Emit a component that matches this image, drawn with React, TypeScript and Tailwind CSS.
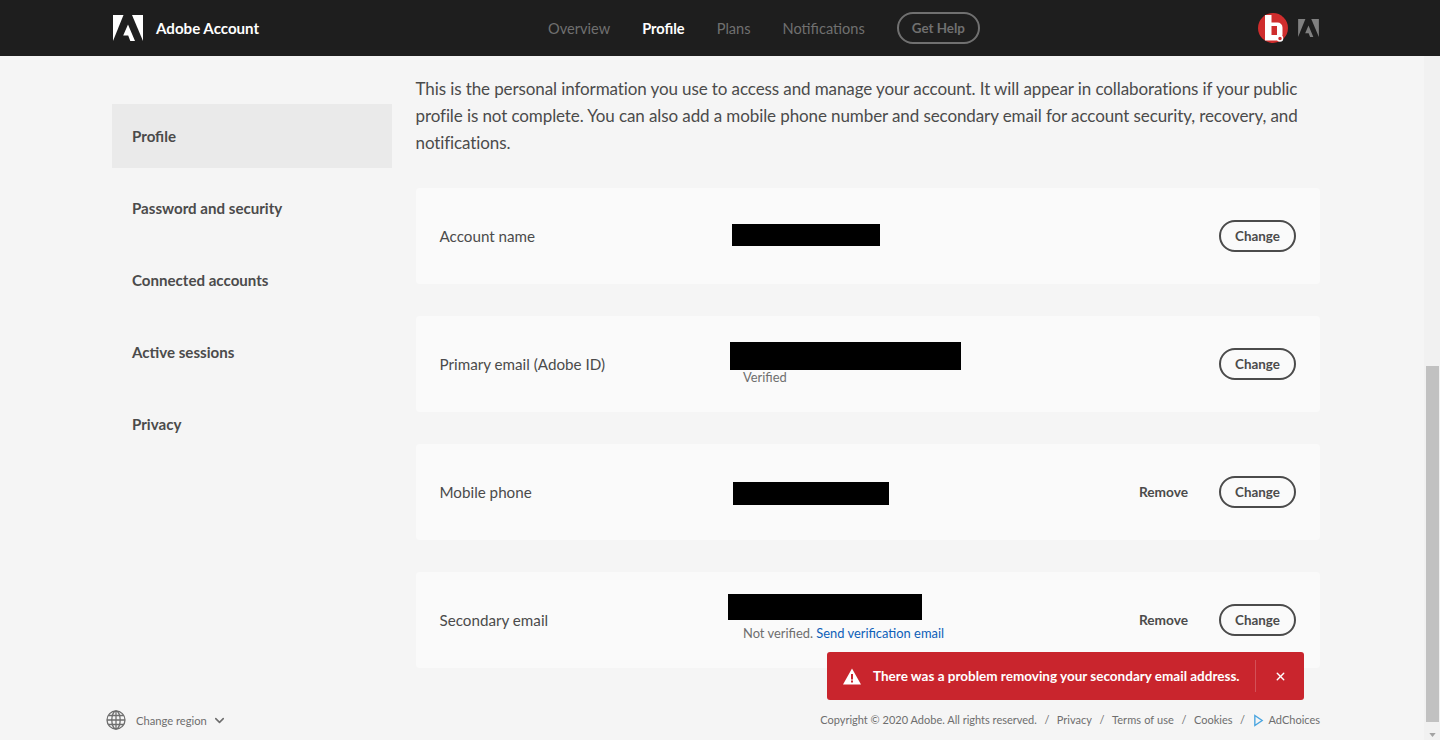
import { ChevronDown, X } from "lucide-react";

const FONT = "font-['Lato','Open_Sans',sans-serif]";

const SIDE_ITEMS = ["Profile", "Password and security", "Connected accounts", "Active sessions", "Privacy"];

function AdobeMark({ className }: { className: string }) {
  return (
    <svg viewBox="0 0 30 26" className={className} fill="currentColor" aria-hidden="true">
      <polygon points="0,0 10.5,0 0,26" />
      <polygon points="19,0 30,0 30,26" />
      <polygon points="15,9.5 22,26 17.3,26 15.2,20.6 10.2,20.6" />
    </svg>
  );
}

function ChangeButton() {
  return (
    <button className="flex h-8 w-[77px] items-center justify-center rounded-full border-2 border-[#4b4b4b] text-[13.4px] font-bold text-[#4b4b4b]">
      Change
    </button>
  );
}

function Row({
  label,
  bar,
  removable,
  children,
}: {
  label: string;
  bar: string;
  removable?: boolean;
  children?: React.ReactNode;
}) {
  return (
    <div className="flex h-24 items-center rounded bg-[#fafafa] pl-[23.5px] pr-6">
      <div className="w-[292.5px] text-[15.2px] text-[#4b4b4b]">{label}</div>
      <div className="flex-1">
        <div className={`${bar} bg-black`} />
        {children}
      </div>
      {removable && <button className="mr-[31px] text-[13.7px] font-bold text-[#4b4b4b]">Remove</button>}
      <ChangeButton />
    </div>
  );
}

export default function App() {
  return (
    <div className={`${FONT} relative flex h-[740px] w-[1440px] flex-col overflow-hidden bg-[#f5f5f5]`}>
      <header className="flex h-14 w-full items-center bg-[#1e1e1e] pl-[113px] pr-[121px]">
        <div className="flex w-[435px] items-center">
          <AdobeMark className="h-[26px] w-[30px] text-white" />
          <span className="ml-[13px] text-[15.1px] font-bold text-white">Adobe Account</span>
        </div>
        <nav className="flex items-center text-[14.6px] text-[#707070]">
          <span className="pt-px">Overview</span>
          <span className="ml-8 pt-px font-bold text-white">Profile</span>
          <span className="ml-8 pt-px">Plans</span>
          <span className="ml-8 pt-px">Notifications</span>
          <span className="ml-8 flex h-8 w-[83px] items-center justify-center rounded-full border-2 border-[#707070] text-[13.4px] font-bold">
            Get Help
          </span>
        </nav>
        <div className="ml-auto flex items-center">
          <div className="relative flex h-[30px] w-[30px] items-center justify-center rounded-full bg-[#cf2d2d]">
            <svg viewBox="0 0 30 30" className="h-[30px] w-[30px]" aria-hidden="true">
              <path d="M7 2h6.5v7.5h6a5 5 0 0 1 5 5v7a6 6 0 0 1-6 6H7z M13.5 13v9H19v-9z" fill="#fff" fillRule="evenodd" />
              <circle cx="22" cy="25.5" r="2.5" fill="#cf2d2d" stroke="#fff" strokeWidth="1.5" />
            </svg>
          </div>
          <AdobeMark className="ml-[10px] h-[18px] w-[21px] text-[#808080]" />
        </div>
      </header>

      <div className="flex min-h-0 flex-1">
        <div className="flex min-w-0 flex-1 flex-col pl-[112px] pr-[104px]">
          <div className="flex flex-1">
            <aside className="mt-12 w-[280px] shrink-0">
              {SIDE_ITEMS.map((item, i) => (
                <div
                  key={item}
                  className={`flex h-16 items-center pl-5 text-[15.1px] font-bold text-[#4b4b4b] ${i > 0 ? "mt-2" : "bg-[#eaeaea]"}`}
                >
                  {item}
                </div>
              ))}
            </aside>
            <main className="ml-6 min-w-0 flex-1 pt-[19px]">
              <p className="-ml-[0.5px] text-[17px] leading-[27px] tracking-[-0.1px] text-[#4b4b4b]">
                This is the personal information you use to access and manage your account. It will appear in
                collaborations if your public profile is not complete. You can also add a mobile phone number and
                secondary email for account security, recovery, and notifications.
              </p>
              <div className="mt-[32px] flex flex-col gap-8">
                <Row label="Account name" bar="-mt-[2px] h-[22px] w-[148px]" />
                <Row label="Primary email (Adobe ID)" bar="-mt-[2px] -ml-[2px] h-7 w-[231px]">
                  <div className="pl-[11px] text-[12.9px] leading-[14px] text-[#6e6e6e]">Verified</div>
                </Row>
                <Row label="Mobile phone" bar="mt-[3px] ml-px h-[23px] w-[156px]" removable />
                <Row label="Secondary email" bar="-mt-[6px] -ml-[4px] h-[26px] w-[194px]" removable>
                  <div className="mt-[6px] pl-[11px] text-[12.9px] leading-[14px] text-[#6e6e6e]">
                    Not verified. <span className="text-[#0d5fb8]">Send verification email</span>
                  </div>
                </Row>
              </div>
            </main>
          </div>
          <footer className="flex h-[40px] items-start justify-between pt-[10px] text-[#6e6e6e]">
            <div className="-ml-[6px] flex items-center">
              <svg viewBox="0 0 20 20" className="h-5 w-5" fill="none" stroke="#6e6e6e" strokeWidth="1.3" aria-hidden="true">
                <circle cx="10" cy="10" r="9" />
                <ellipse cx="10" cy="10" rx="4.2" ry="9" />
                <path d="M10 1v18M1 10h18M2.4 5.5h15.2M2.4 14.5h15.2" />
              </svg>
              <span className="ml-[10px] pt-[2px] text-[11.2px]">Change region</span>
              <ChevronDown className="ml-[5px] h-[15px] w-[15px]" strokeWidth={2.5} />
            </div>
            <div className="flex items-center gap-[7.5px] pt-[2px] text-[11px]">
              <span>Copyright © 2020 Adobe. All rights reserved.</span>
              <span>/</span>
              <span>Privacy</span>
              <span>/</span>
              <span className="tracking-[0.1px]">Terms of use</span>
              <span>/</span>
              <span>Cookies</span>
              <span>/</span>
              <span className="flex items-center gap-[5px]">
                <svg viewBox="0 0 12 14" className="h-[13px] w-[11px]" fill="none" stroke="#4aa5e0" strokeWidth="1.5" aria-hidden="true">
                  <path d="M2 1.5v11l8-5.5z" />
                </svg>
                AdChoices
              </span>
            </div>
          </footer>
        </div>
        <div className="flex w-4 shrink-0 flex-col items-center bg-[#f1f1f1]">
          <div className="mt-[310px] h-[356px] w-[13px] bg-[#c1c1c1]" />
          <svg viewBox="0 0 8 5" className="mt-[11px] h-[4px] w-[7px]" fill="#a3a3a3" aria-hidden="true">
            <path d="M0 0h8L4 5z" />
          </svg>
        </div>
      </div>

      <div className="absolute left-[827px] top-[652px] flex h-12 w-[477px] items-center rounded-[3px] bg-[#c9252d] text-white">
        <svg viewBox="0 0 18 16" className="ml-[16px] h-[17px] w-[18px]" aria-hidden="true">
          <path d="M9 0 18 16H0z M8 5.5v5.5h2V5.5z M8 12v2h2v-2z" fill="#fff" fillRule="evenodd" />
        </svg>
        <span className="ml-[12px] text-[13.5px] font-bold">There was a problem removing your secondary email address.</span>
        <div className="absolute left-[428px] top-2 h-8 w-px bg-white/20" />
        <X className="ml-auto mr-[17px] h-[13px] w-[13px]" strokeWidth={2.5} />
      </div>
    </div>
  );
}
